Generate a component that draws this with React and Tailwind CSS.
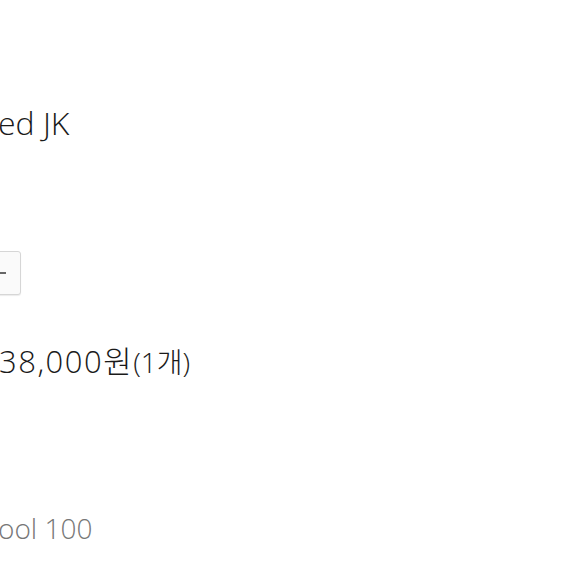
export default function App() {
  return (
    <div className="w-[588px] h-[588px] bg-white overflow-hidden font-['Open_Sans','Noto_Sans_CJK_KR',sans-serif] text-[#1a1a1a]">
      <div className="pt-[108px] flex flex-col items-start">
        <p className="ml-[-2px] text-[32px] font-light leading-[30px] whitespace-nowrap">ed JK</p>
        <button className="mt-[113px] ml-[-24px] w-[45px] h-[44px] rounded-[3px] border border-[#d6d6d6] bg-[#fafafa] shadow-[0_1px_1px_rgba(0,0,0,0.08)] flex items-center justify-center">
          <span className="block w-[14px] h-[2px] bg-[#666]" />
        </button>
        <p className="mt-[50px] ml-[-1px] whitespace-nowrap leading-[32px] font-light">
          <span className="text-[31px] tracking-[1.5px]">38,000원</span>
          <span className="text-[28px]">(1개)</span>
        </p>
        <p className="mt-[131px] ml-[-2px] text-[28px] font-light leading-[28px] text-[#777] whitespace-nowrap">ool 100</p>
      </div>
    </div>
  );
}
